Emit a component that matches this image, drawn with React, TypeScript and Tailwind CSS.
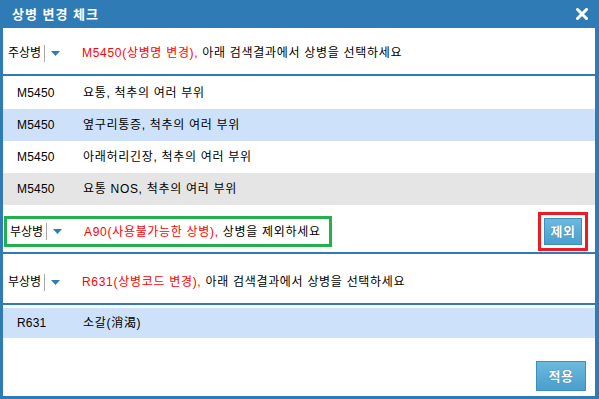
const FONT = '"Liberation Sans", "Noto Sans CJK KR", sans-serif';

const rows = [
  { code: 'M5450', name: '요통, 척추의 여러 부위', bg: 'bg-white' },
  { code: 'M5450', name: '옆구리통증, 척추의 여러 부위', bg: 'bg-[#cde2fa]' },
  { code: 'M5450', name: '아래허리긴장, 척추의 여러 부위', bg: 'bg-white' },
  { code: 'M5450', name: '요통 NOS, 척추의 여러 부위', bg: 'bg-[#e5e5e5]' },
];

function Picker({ label }: { label: string }) {
  return (
    <div className="w-[79px] flex items-center pl-[5px]">
      <span>{label}</span>
      <span className="ml-[3px] h-[17px] w-px bg-[#a8a8a8]" />
      <svg width="9" height="5" viewBox="0 0 9 5" className="ml-[6px]">
        <path d="M0 0h9L4.5 5z" fill="#2e7bb6" />
      </svg>
    </div>
  );
}

function BlueButton({ children }: { children: string }) {
  return (
    <button className="w-full h-full flex items-center justify-center border border-[#3d8fc2] bg-gradient-to-b from-[#6bb9de] to-[#4a9fcd] text-white font-bold text-[13px] tracking-[0.5px] [text-shadow:0_0_1px_#2a6a96]">
      {children}
    </button>
  );
}

export default function App() {
  return (
    <div
      className="w-[599px] h-[399px] bg-[#2e7bb6] flex flex-col text-[12px] text-black leading-none"
      style={{ fontFamily: FONT }}
    >
      {/* title */}
      <div className="h-[28px] flex items-center justify-between pl-[12px] pr-[11px]">
        <span className="text-white font-bold text-[13px] tracking-[1px]">상병 변경 체크</span>
        <svg width="12" height="12" viewBox="0 0 12 12">
          <path d="M1.5 1.5l9 9M10.5 1.5l-9 9" stroke="#fff" strokeWidth="3" strokeLinecap="square" />
        </svg>
      </div>

      <div className="flex-1 ml-[3px] mr-[4px] mb-[3px] bg-white flex flex-col">
        {/* 주상병 */}
        <div className="h-[46px] flex items-center pt-[4px]">
          <Picker label="주상병" />
          <span className="text-[#ff0000] tracking-[0.7px]">M5450(상병명 변경),</span>
          <span className="ml-[4px] tracking-[0.7px]">아래 검색결과에서 상병을 선택하세요</span>
        </div>
        <div className="h-[2px] bg-[#2e7bb6]" />

        <div className="pt-[1px]">
          {rows.map((r, i) => (
            <div key={i} className={`h-[32px] flex items-center ${r.bg}`}>
              <span className="w-[80px] pl-[14px] tracking-[0.2px]">{r.code}</span>
              <span className="tracking-[0.7px]">{r.name}</span>
            </div>
          ))}
        </div>

        {/* 부상병 - 제외 */}
        <div className="h-[47px] flex items-center pt-[6px]">
          <div className="ml-[1px] w-[328px] h-[31px] border-[3px] border-[#22b14c] flex items-center">
            <div className="-ml-[2px] flex items-center">
              <Picker label="부상병" />
              <span className="text-[#ff0000] tracking-[0.7px]">A90(사용불가능한 상병),</span>
              <span className="ml-[4px] tracking-[0.7px]">상병을 제외하세요</span>
            </div>
          </div>
          <div className="ml-auto mr-[7px] w-[50px] h-[39px] border-[3px] border-[#ed1c24] p-[3px] flex">
            <BlueButton>제외</BlueButton>
          </div>
        </div>
        <div className="h-[2px] bg-[#2e7bb6]" />

        {/* 부상병 */}
        <div className="h-[49px] flex items-center pt-[7px]">
          <Picker label="부상병" />
          <span className="text-[#ff0000] tracking-[0.7px]">R631(상병코드 변경),</span>
          <span className="ml-[4px] tracking-[0.7px]">아래 검색결과에서 상병을 선택하세요</span>
        </div>
        <div className="h-[2px] bg-[#2e7bb6]" />

        <div className="mt-[3px] h-[30px] flex items-center bg-[#cde2fa]">
          <span className="w-[80px] pl-[14px] tracking-[0.2px]">R631</span>
          <span className="tracking-[0.7px]">소갈(消渴)</span>
        </div>

        <div className="flex-1 flex items-end justify-end pr-[9px] pb-[5px]">
          <div className="w-[50px] h-[30px] flex">
            <BlueButton>적용</BlueButton>
          </div>
        </div>
      </div>
    </div>
  );
}
